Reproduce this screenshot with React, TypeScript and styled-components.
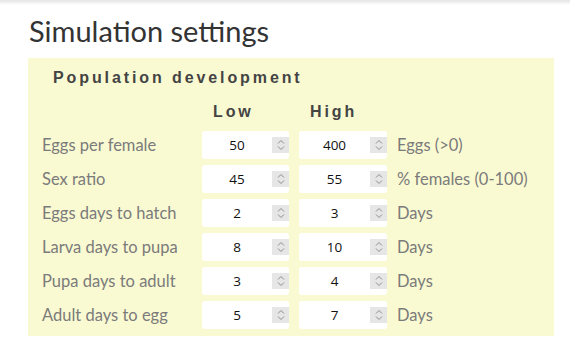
import styled, { createGlobalStyle } from "styled-components";

const GlobalStyle = createGlobalStyle`
  body {
    margin: 0;
    background: #ffffff;
  }
`;

const TopShade = styled.div`
  height: 5px;
  background: linear-gradient(#e4e4e4, #ffffff);
`;

const Page = styled.div`
  padding: 0 16px 0 28px;
`;

const Title = styled.h2`
  margin: 8px 0 9px 1px;
  font-family: Lato, "Liberation Sans", sans-serif;
  font-weight: 400;
  font-size: 29px;
  line-height: 36px;
  color: #333333;
`;

const Panel = styled.div`
  width: 498px;
  background: #fafad2;
  padding: 10px 14px 7px;
`;

const Heading = styled.div`
  font-family: "Liberation Sans", Arial, sans-serif;
  font-weight: 700;
  font-size: 16px;
  line-height: 20px;
  letter-spacing: 2.9px;
  color: #444444;
  padding-left: 11px;
  margin-bottom: 14px;
`;

const Grid = styled.div`
  display: grid;
  grid-template-columns: 150px 87px 88px 1fr;
  column-gap: 10px;
  row-gap: 6px;
  align-items: center;
`;

const ColHead = styled(Heading)`
  margin-bottom: 3px;
`;

const Label = styled.div`
  font-family: Lato, "Liberation Sans", sans-serif;
  font-size: 16.5px;
  line-height: 20px;
  color: #7b7b7b;
  white-space: nowrap;
`;

const Field = styled.div`
  display: flex;
  align-items: center;
  height: 28px;
  background: #ffffff;
  border-radius: 3px;
`;

const Value = styled.input`
  flex: 1;
  min-width: 0;
  border: none;
  outline: none;
  background: transparent;
  text-align: center;
  font-family: "Open Sans", "Liberation Sans", sans-serif;
  font-size: 13.5px;
  color: #111111;
  padding: 0;
`;

const Spinner = styled.span`
  width: 17px;
  height: 16px;
  background: #e6e6e6;
  display: flex;
  align-items: center;
  justify-content: center;
`;

const Unit = styled(Label)``;

type Row = { label: string; low: number; high: number; unit: string };

const rows: Row[] = [
  { label: "Eggs per female", low: 50, high: 400, unit: "Eggs (>0)" },
  { label: "Sex ratio", low: 45, high: 55, unit: "% females (0-100)" },
  { label: "Eggs days to hatch", low: 2, high: 3, unit: "Days" },
  { label: "Larva days to pupa", low: 8, high: 10, unit: "Days" },
  { label: "Pupa days to adult", low: 3, high: 4, unit: "Days" },
  { label: "Adult days to egg", low: 5, high: 7, unit: "Days" },
];

function NumberBox({ value }: { value: number }) {
  return (
    <Field>
      <Value type="text" value={value} readOnly />
      <Spinner>
        <svg width="8" height="12" viewBox="0 0 8 12" fill="none" stroke="#8d8d8d" strokeWidth="1">
          <path d="M1 4.5 L4 1.5 L7 4.5" />
          <path d="M1 7.5 L4 10.5 L7 7.5" />
        </svg>
      </Spinner>
    </Field>
  );
}

function App() {
  return (
    <>
      <GlobalStyle />
      <TopShade />
      <Page>
        <Title>Simulation settings</Title>
        <Panel>
          <Heading>Population development</Heading>
          <Grid>
            <div />
            <ColHead>Low</ColHead>
            <ColHead>High</ColHead>
            <div />
            {rows.map((r) => (
              <>
                <Label key={r.label}>{r.label}</Label>
                <NumberBox value={r.low} />
                <NumberBox value={r.high} />
                <Unit>{r.unit}</Unit>
              </>
            ))}
          </Grid>
        </Panel>
      </Page>
    </>
  );
}

export default App;
